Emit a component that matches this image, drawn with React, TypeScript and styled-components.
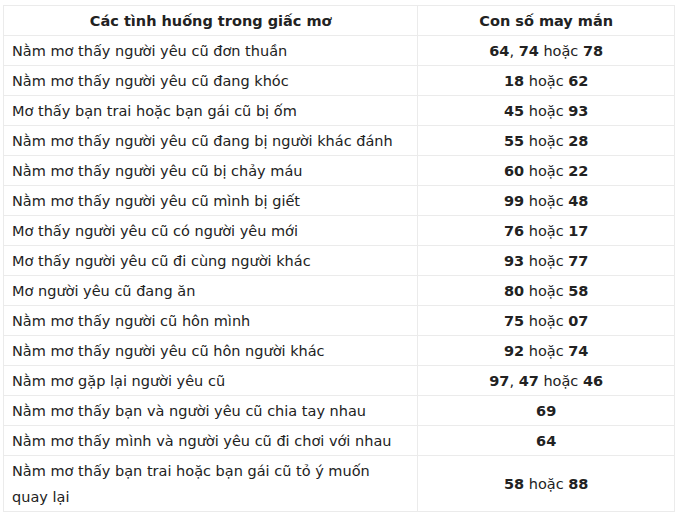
import React from "react";
import styled, { createGlobalStyle } from "styled-components";

const Global = createGlobalStyle`
  html, body { margin: 0; padding: 0; background: #ffffff; }
  body { font-family: "DejaVu Sans", Verdana, sans-serif; color: #222222; }
`;

const Wrap = styled.div`
  padding: 5px 5px 0 3px;
`;

const Table = styled.table`
  width: 672px;
  border-collapse: collapse;
  font-size: 14.5px;
  line-height: 26px;
`;

const Th = styled.th`
  border: 1px solid #ebebeb;
  padding: 1.5px 8px;
  font-weight: bold;
  text-align: center;
`;

const Td = styled.td<{ $center?: boolean }>`
  border: 1px solid #ebebeb;
  padding: 1.5px 8px;
  text-align: ${(p) => (p.$center ? "center" : "left")};
  vertical-align: middle;
`;

const B = styled.b`
  font-weight: bold;
`;

type Row = { text: string; nums: string[] };

const rows: Row[] = [
  { text: "Nằm mơ thấy người yêu cũ đơn thuần", nums: ["64", "74", "78"] },
  { text: "Nằm mơ thấy người yêu cũ đang khóc", nums: ["18", "62"] },
  { text: "Mơ thấy bạn trai hoặc bạn gái cũ bị ốm", nums: ["45", "93"] },
  { text: "Nằm mơ thấy người yêu cũ đang bị người khác đánh", nums: ["55", "28"] },
  { text: "Nằm mơ thấy người yêu cũ bị chảy máu", nums: ["60", "22"] },
  { text: "Nằm mơ thấy người yêu cũ mình bị giết", nums: ["99", "48"] },
  { text: "Mơ thấy người yêu cũ có người yêu mới", nums: ["76", "17"] },
  { text: "Mơ thấy người yêu cũ đi cùng người khác", nums: ["93", "77"] },
  { text: "Mơ người yêu cũ đang ăn", nums: ["80", "58"] },
  { text: "Nằm mơ thấy người cũ hôn mình", nums: ["75", "07"] },
  { text: "Nằm mơ thấy người yêu cũ hôn người khác", nums: ["92", "74"] },
  { text: "Nằm mơ gặp lại người yêu cũ", nums: ["97", "47", "46"] },
  { text: "Nằm mơ thấy bạn và người yêu cũ chia tay nhau", nums: ["69"] },
  { text: "Nằm mơ thấy mình và người yêu cũ đi chơi với nhau", nums: ["64"] },
  { text: "Nằm mơ thấy bạn trai hoặc bạn gái cũ tỏ ý muốn quay lại", nums: ["58", "88"] },
];

function Numbers({ nums }: { nums: string[] }) {
  if (nums.length === 1) return <B>{nums[0]}</B>;
  if (nums.length === 2)
    return (
      <>
        <B>{nums[0]}</B> hoặc <B>{nums[1]}</B>
      </>
    );
  return (
    <>
      <B>{nums[0]}</B>, <B>{nums[1]}</B> hoặc <B>{nums[2]}</B>
    </>
  );
}

export default function App() {
  return (
    <>
      <Global />
      <Wrap>
        <Table>
          <colgroup>
            <col style={{ width: 415 }} />
            <col style={{ width: 257 }} />
          </colgroup>
          <thead>
            <tr>
              <Th>Các tình huống trong giấc mơ</Th>
              <Th>Con số may mắn</Th>
            </tr>
          </thead>
          <tbody>
            {rows.map((r, i) => (
              <tr key={i}>
                <Td>{r.text}</Td>
                <Td $center>
                  <Numbers nums={r.nums} />
                </Td>
              </tr>
            ))}
          </tbody>
        </Table>
      </Wrap>
    </>
  );
}
